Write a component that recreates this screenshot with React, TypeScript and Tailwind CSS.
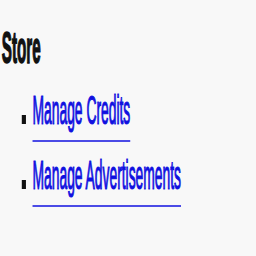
import React from 'react';

const links = ['Manage Credits', 'Manage Advertisements'];

const App: React.FC = () => {
  return (
    <div className="w-[256px] h-[256px] overflow-hidden bg-[#f8f8f8]">
      {/* the screenshot is squeezed sideways, so the content is scaled on x */}
      <div
        className="w-[740px] pt-[26px] pl-[5px] origin-top-left scale-x-[0.346]"
        style={{ fontFamily: '"Liberation Sans", Arial, sans-serif' }}
      >
        <h2 className="text-[44px] leading-none font-bold text-[#111] [-webkit-text-stroke:1.6px_currentColor]">
          Store
        </h2>
        <ul className="mt-[20px] flex flex-col gap-[25px]">
          {links.map((label) => (
            <li key={label} className="flex items-baseline pl-[58px] text-[40px] leading-none">
              <span className="inline-block w-[12px] h-[9px] mb-[3px] mr-[19px] bg-[#111]" />
              <a
                href="#"
                className="text-[#1010e0] [-webkit-text-stroke:1.2px_currentColor] underline decoration-[#4b4be6] decoration-2 underline-offset-[16px]"
              >
                {label}
              </a>
            </li>
          ))}
        </ul>
      </div>
    </div>
  );
};

export default App;
